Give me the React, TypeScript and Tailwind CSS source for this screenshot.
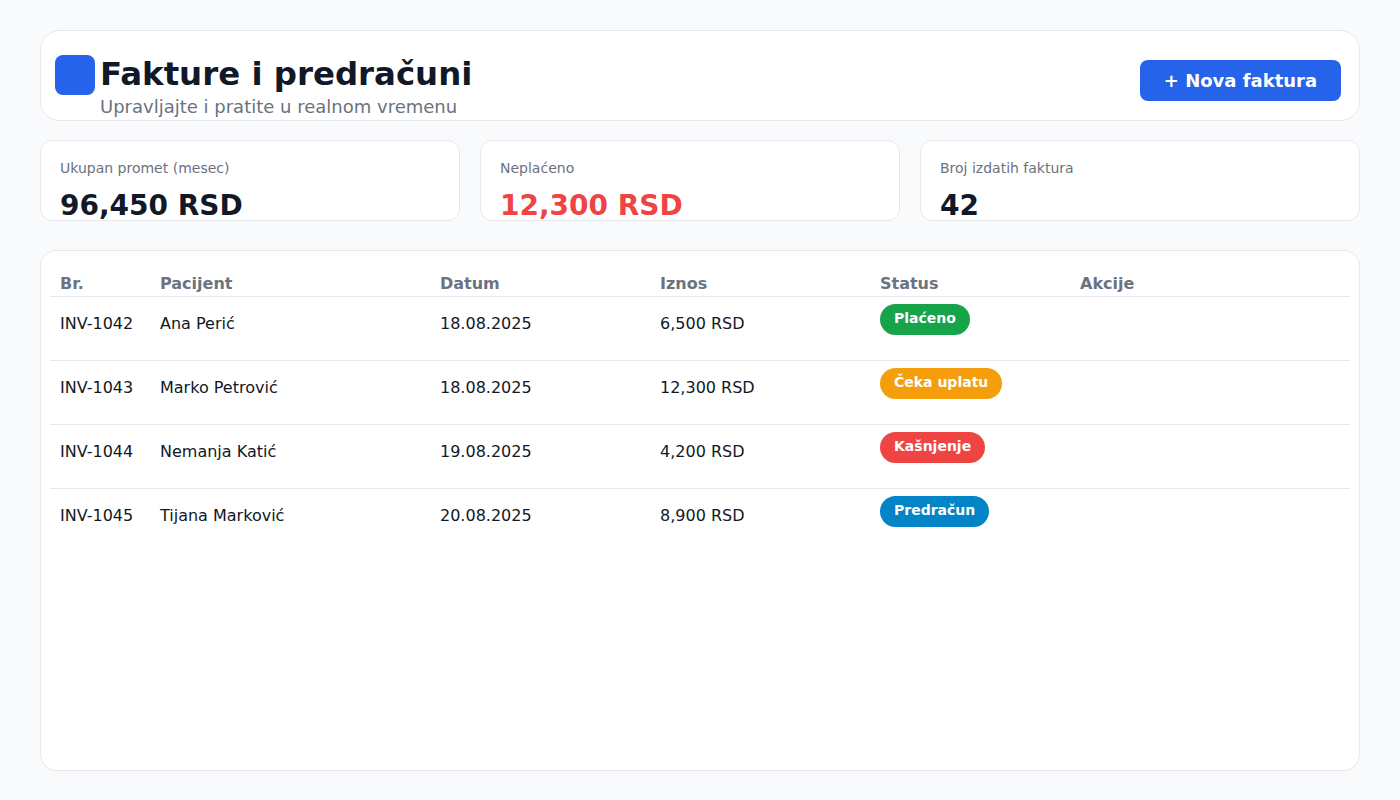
import React from "react";

const rows = [
  { id: "INV-1042", name: "Ana Perić", date: "18.08.2025", amount: "6,500 RSD", status: "Plaćeno", color: "bg-[#16a34a]" },
  { id: "INV-1043", name: "Marko Petrović", date: "18.08.2025", amount: "12,300 RSD", status: "Čeka uplatu", color: "bg-[#f59e0b]" },
  { id: "INV-1044", name: "Nemanja Katić", date: "19.08.2025", amount: "4,200 RSD", status: "Kašnjenje", color: "bg-[#ef4444]" },
  { id: "INV-1045", name: "Tijana Marković", date: "20.08.2025", amount: "8,900 RSD", status: "Predračun", color: "bg-[#0284c7]" },
];

const cols = "grid grid-cols-[100px_280px_220px_220px_200px_1fr]";

export default function App() {
  return (
    <div className="min-h-screen bg-[#f9fafb] px-10 pt-[30px] pb-[29px] font-['DejaVu_Sans',sans-serif]">
      <div className="flex h-[91px] items-start justify-between rounded-[20px] border border-[#e5e7eb] bg-white pl-[14px] pr-[18px] pt-[24px]">
        <div className="flex gap-[5px]">
          <div className="h-10 w-10 rounded-lg bg-[#2563eb]" />
          <div>
            <h1 className="text-[32.4px] font-bold leading-[1.2] text-[#111827]">Fakture i predračuni</h1>
            <p className="mt-[1px] text-[18px] leading-[24px] text-[#6b7280]">Upravljajte i pratite u realnom vremenu</p>
          </div>
        </div>
        <button className="mt-[5px] h-[41px] w-[201px] rounded-lg bg-[#2563eb] text-[18px] font-bold text-white">
          + Nova faktura
        </button>
      </div>

      <div className="mt-[19px] grid grid-cols-[420px_420px_440px] gap-5">
        <div className="h-[81px] rounded-xl border border-[#e5e7eb] bg-white px-[19px] pt-[17px]">
          <div className="text-sm leading-5 text-[#6b7280]">Ukupan promet (mesec)</div>
          <div className="mt-[11px] text-[28px] font-bold leading-[1.2] text-[#111827]">96,450 RSD</div>
        </div>
        <div className="h-[81px] rounded-xl border border-[#e5e7eb] bg-white px-[19px] pt-[17px]">
          <div className="text-sm leading-5 text-[#6b7280]">Neplaćeno</div>
          <div className="mt-[11px] text-[28px] font-bold leading-[1.2] text-[#ef4444]">12,300 RSD</div>
        </div>
        <div className="h-[81px] rounded-xl border border-[#e5e7eb] bg-white px-[19px] pt-[17px]">
          <div className="text-sm leading-5 text-[#6b7280]">Broj izdatih faktura</div>
          <div className="mt-[11px] text-[28px] font-bold leading-[1.2] text-[#111827]">42</div>
        </div>
      </div>

      <div className="mt-[29px] h-[521px] rounded-2xl border border-[#e5e7eb] bg-white px-[9px] py-[10px]">
        <div className={`${cols} h-[36px] border-b border-[#e5e7eb] text-base font-bold leading-6 text-[#6b7280]`}>
          {["Br.", "Pacijent", "Datum", "Iznos", "Status", "Akcije"].map((h) => (
            <div key={h} className="px-[10px] pt-[11px]">{h}</div>
          ))}
        </div>
        {rows.map((r, i) => (
          <div
            key={r.id}
            className={`${cols} h-[64px] text-base leading-6 text-[#111827] ${i < rows.length - 1 ? "border-b border-[#e5e7eb]" : ""}`}
          >
            <div className="px-[10px] pt-[15px]">{r.id}</div>
            <div className="px-[10px] pt-[15px]">{r.name}</div>
            <div className="px-[10px] pt-[15px]">{r.date}</div>
            <div className="px-[10px] pt-[15px]">{r.amount}</div>
            <div className="px-[10px] pt-[7px]">
              <span className={`inline-flex h-[31px] items-center rounded-full px-[14px] pb-[3px] text-sm font-bold text-white ${r.color}`}>
                {r.status}
              </span>
            </div>
            <div className="px-[10px]" />
          </div>
        ))}
      </div>
    </div>
  );
}
